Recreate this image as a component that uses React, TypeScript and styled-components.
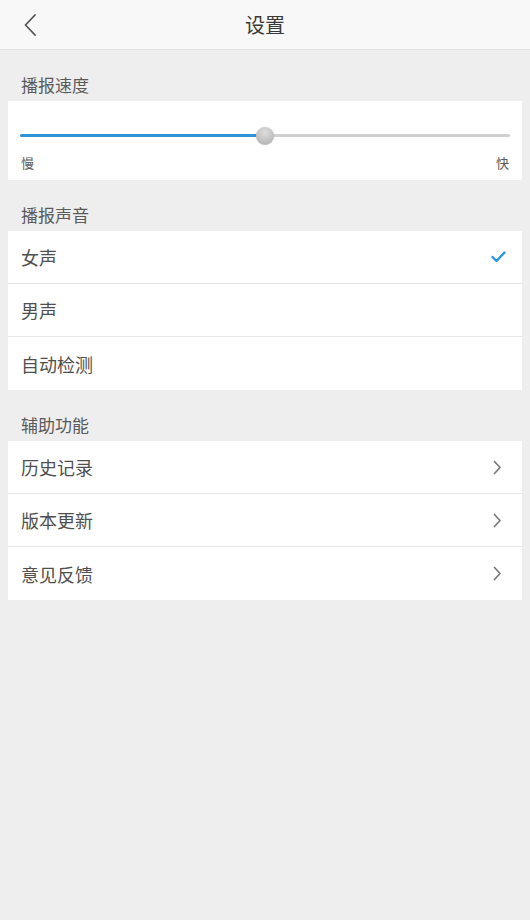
import React from "react";
import styled, { createGlobalStyle } from "styled-components";

const Global = createGlobalStyle`
  html, body { margin: 0; padding: 0; background: #eeeeee; }
  body { font-family: "Noto Sans CJK SC", "Noto Sans", sans-serif; }
  * { box-sizing: border-box; }
`;

const Page = styled.div`
  width: 530px;
  min-height: 920px;
  background: #eeeeee;
  display: flex;
  flex-direction: column;
`;

const Header = styled.header`
  height: 50px;
  background: #f8f8f8;
  border-bottom: 1px solid #e2e2e2;
  display: grid;
  grid-template-columns: 60px 1fr 60px;
  align-items: center;
`;

const BackButton = styled.div`
  display: flex;
  align-items: center;
  padding-left: 23px;
  height: 100%;
`;

const Title = styled.h1`
  margin: 0;
  text-align: center;
  font-size: 20px;
  font-weight: 400;
  color: #3a3a3a;
  line-height: 50px;
`;

const Body = styled.main`
  padding: 0 8px;
  display: flex;
  flex-direction: column;
`;

const SectionLabel = styled.div`
  height: 51px;
  padding: 23px 0 0 13px;
  font-size: 17px;
  line-height: 24px;
  color: #5a5a5a;
`;

const Card = styled.div`
  background: #fff;
`;

const SliderCard = styled(Card)`
  height: 79px;
  padding: 0 12px;
  display: flex;
  flex-direction: column;
`;

const Track = styled.div`
  position: relative;
  margin-top: 33px;
  height: 3px;
  border-radius: 2px;
  background: #d0d0d0;
`;

const Fill = styled.div`
  position: absolute;
  left: 0;
  top: 0;
  height: 3px;
  border-radius: 2px;
  background: #2f93d8;
`;

const Thumb = styled.div`
  position: absolute;
  top: 50%;
  width: 18px;
  height: 18px;
  margin-left: -9px;
  margin-top: -9px;
  border-radius: 50%;
  background: radial-gradient(circle at 50% 30%, #dedede, #ababab);
  box-shadow: 0 0 1px rgba(0, 0, 0, 0.3);
`;

const SliderLabels = styled.div`
  display: flex;
  justify-content: space-between;
  margin-top: 17px;
  padding: 0 1px;
  font-size: 13px;
  line-height: 18px;
  color: #5a5a5a;
`;

const Row = styled.div<{ $last?: boolean; $padRight?: number }>`
  height: 53px;
  display: flex;
  align-items: center;
  justify-content: space-between;
  padding: 0 ${(p) => p.$padRight ?? 16}px 0 13px;
  border-bottom: ${(p) => (p.$last ? "none" : "1px solid #e6e6e6")};
  font-size: 18px;
  color: #505050;
`;

const Chevron = () => (
  <svg width="9" height="15" viewBox="0 0 9 15">
    <path d="M1.5 1.5 L7 7.5 L1.5 13.5" fill="none" stroke="#7a7a7a" strokeWidth="1.7" strokeLinecap="round" strokeLinejoin="round" />
  </svg>
);

const Check = () => (
  <svg width="15" height="12" viewBox="0 0 15 12">
    <path d="M1.5 6 L5.5 10 L13.5 1.5" fill="none" stroke="#2b97de" strokeWidth="2.4" strokeLinecap="round" strokeLinejoin="round" />
  </svg>
);

const voices = ["女声", "男声", "自动检测"];
const tools = ["历史记录", "版本更新", "意见反馈"];

export default function App() {
  const value = 0.5;
  return (
    <Page>
      <Global />
      <Header>
        <BackButton>
          <svg width="14" height="24" viewBox="0 0 14 24">
            <path d="M12 2 L2.5 12 L12 22" fill="none" stroke="#555" strokeWidth="1.8" strokeLinecap="round" strokeLinejoin="round" />
          </svg>
        </BackButton>
        <Title>设置</Title>
        <div />
      </Header>
      <Body>
        <SectionLabel>播报速度</SectionLabel>
        <SliderCard>
          <Track>
            <Fill style={{ width: `${value * 100}%` }} />
            <Thumb style={{ left: `${value * 100}%` }} />
          </Track>
          <SliderLabels>
            <span>慢</span>
            <span>快</span>
          </SliderLabels>
        </SliderCard>
        <SectionLabel>播报声音</SectionLabel>
        <Card>
          {voices.map((v, i) => (
            <Row key={v} $last={i === voices.length - 1}>
              <span>{v}</span>
              {i === 0 && <Check />}
            </Row>
          ))}
        </Card>
        <SectionLabel>辅助功能</SectionLabel>
        <Card>
          {tools.map((t, i) => (
            <Row key={t} $last={i === tools.length - 1} $padRight={20}>
              <span>{t}</span>
              <Chevron />
            </Row>
          ))}
        </Card>
      </Body>
    </Page>
  );
}
